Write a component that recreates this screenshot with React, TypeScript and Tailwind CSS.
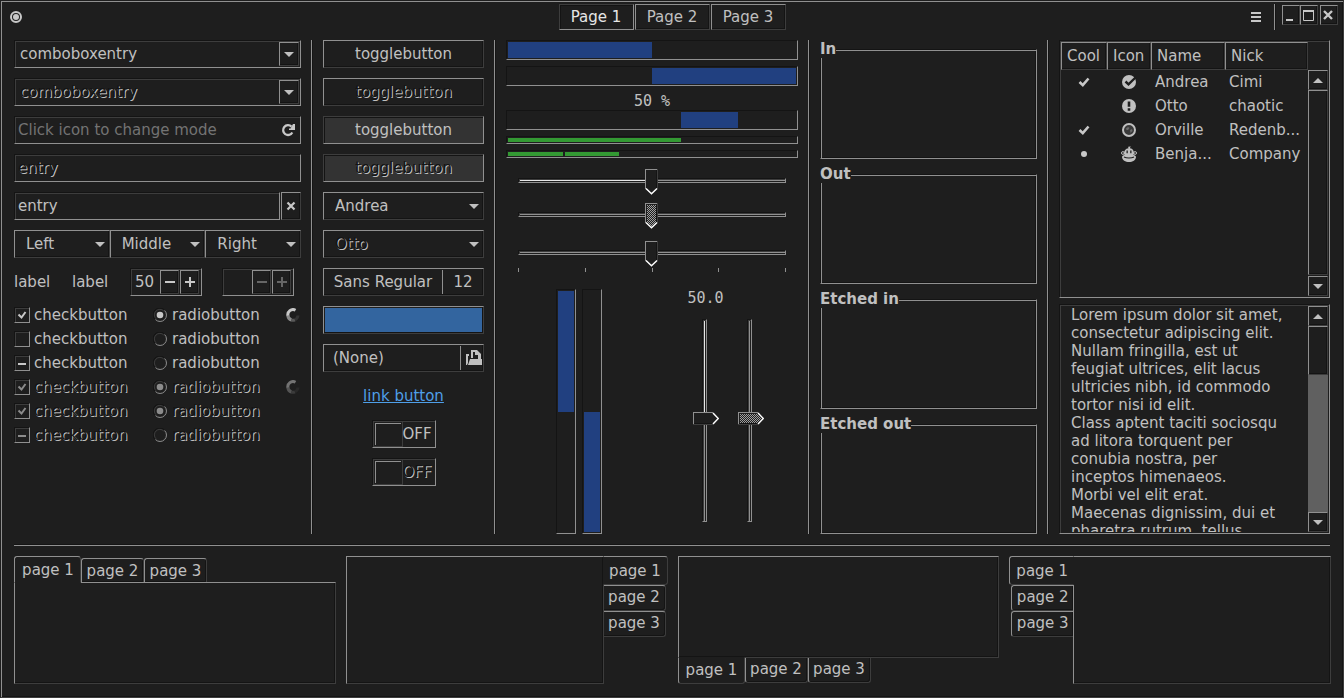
import React, { useState } from "react";

const RAISED =
  "border border-t-[#909090] border-l-[#909090] border-b-[#3d3d3d] border-r-[#3d3d3d] shadow-[inset_-1px_-1px_0_#141414]";
const SUNKEN =
  "border border-t-[#141414] border-l-[#141414] border-b-[#909090] border-r-[#909090] shadow-[inset_1px_1px_0_#3d3d3d]";
const PRESSED =
  "border border-t-[#3d3d3d] border-l-[#3d3d3d] border-b-[#909090] border-r-[#909090] shadow-[inset_1px_1px_0_#141414]";
const TROUGH =
  "border border-t-[#141414] border-l-[#141414] border-b-[#909090] border-r-[#909090]";
const DIM = "text-[#141414] [text-shadow:1px_1px_0_#c0c0c0]";

function Arrow({ up = false }: { up?: boolean }) {
  return (
    <svg width="10" height="5" viewBox="0 0 10 5" fill="#c0c0c0" aria-hidden="true">
      {up ? <path d="M5 0 10 5H0Z" /> : <path d="M0 0h10L5 5Z" />}
    </svg>
  );
}

function VRule() {
  return <div className="w-[2px] shrink-0 border-l border-r border-l-[#909090] border-r-[#141414]" />;
}

function ComboEntry({ label, disabled = false }: { label: string; disabled?: boolean }) {
  return (
    <div className={`flex h-7 items-stretch ${SUNKEN}`}>
      <input
        aria-label={label}
        defaultValue="comboboxentry"
        disabled={disabled}
        className={`min-w-0 flex-1 bg-transparent pl-[5px] outline-none ${disabled ? DIM : ""}`}
      />
      <button
        aria-label={label + " options"}
        className={`mt-px mr-px mb-px flex w-5 items-center justify-center ${RAISED}`}
      >
        <Arrow />
      </button>
    </div>
  );
}

function Combo({ label, options, disabled = false, linked = false }: { label: string; options: string[]; disabled?: boolean; linked?: boolean }) {
  return (
    <div className={`grid h-7 items-center ${linked ? "min-w-0 flex-1" : ""} ${RAISED}`}>
      <select
        aria-label={label}
        disabled={disabled}
        className={`col-start-1 row-start-1 h-full w-full appearance-none bg-transparent pl-[11px] opacity-100 outline-none ${disabled ? DIM : ""}`}
      >
        {options.map((o) => (
          <option key={o}>{o}</option>
        ))}
      </select>
      <span className="pointer-events-none col-start-1 row-start-1 justify-self-end pr-1">
        <Arrow />
      </span>
    </div>
  );
}

function Spin({ value, label, disabled = false }: { value: string; label: string; disabled?: boolean }) {
  const color = disabled ? "#666666" : "#c8c8c8";
  return (
    <div className={`flex h-7 w-[72px] ${SUNKEN}`}>
      <input
        aria-label={label}
        defaultValue={value}
        disabled={disabled}
        className="w-[29px] min-w-0 bg-transparent pl-1 outline-none"
      />
      {["M0 5h10", "M0 5h10M5 0v10"].map((d, i) => (
        <button
          key={d}
          disabled={disabled}
          aria-label={i ? "Increase" : "Decrease"}
          className={`mt-px mb-px flex w-[19px] items-center justify-center ${i ? "ml-px" : ""} ${RAISED}`}
        >
          <svg width="10" height="10" viewBox="0 0 10 10" stroke={color} strokeWidth="2">
            <path d={d} />
          </svg>
        </button>
      ))}
    </div>
  );
}

function Check({ state, disabled = false }: { state: "on" | "off" | "mixed"; disabled?: boolean }) {
  const color = disabled ? "#8c8c8c" : "#c8c8c8";
  return (
    <label className="flex h-[18px] w-[139px] items-center gap-1">
      <span className={`grid size-4 place-items-center ${SUNKEN}`}>
        <input type="checkbox" defaultChecked={state === "on"} disabled={disabled} className="col-start-1 row-start-1 size-3 appearance-none" />
        <svg width="12" height="12" viewBox="0 0 12 12" fill="none" stroke={color} strokeWidth="2" className="pointer-events-none col-start-1 row-start-1">
          {state === "on" && <path d="M2.5 5.5 5.5 8.5 9.5 3" />}
          {state === "mixed" && <path d="M2 7h8" />}
        </svg>
      </span>
      <span className={disabled ? DIM : ""}>checkbutton</span>
    </label>
  );
}

function Radio({ on, group, disabled = false }: { on: boolean; group: string; disabled?: boolean }) {
  return (
    <label className="flex h-[18px] w-[133px] items-center gap-[5px]">
      <span className="grid size-[14px] place-items-center">
        <input type="radio" name={group} defaultChecked={on} disabled={disabled} className="col-start-1 row-start-1 size-[14px] appearance-none" />
        <svg width="14" height="14" viewBox="0 0 14 14" fill="none" className="pointer-events-none col-start-1 row-start-1">
          <path d="M2 11.5A6.4 6.4 0 0 1 11.5 2" stroke="#141414" />
          <path d="M3 10.8A5.4 5.4 0 0 1 10.8 3" stroke="#3d3d3d" />
          <path d="M11.6 2.5A6.4 6.4 0 0 1 2.5 11.6" stroke="#909090" />
          {on && <circle cx="7" cy="7" r="3.3" fill={disabled ? "#8c8c8c" : "#c8c8c8"} />}
        </svg>
      </span>
      <span className={disabled ? DIM : ""}>radiobutton</span>
    </label>
  );
}

function Spinner({ dim = false }: { dim?: boolean }) {
  return (
    <svg width="14" height="14" viewBox="0 0 14 14" fill="none" strokeWidth="3" className={dim ? "opacity-50" : ""} aria-hidden="true">
      <path d="M9.5 2.2A5.2 5.2 0 0 0 2 8" stroke="#c8c8c8" />
      <path d="M1.9 7.5A5.2 5.2 0 0 0 5.5 12" stroke="#8a8a8a" />
      <path d="M5.3 12A5.2 5.2 0 0 0 9 11.8" stroke="#585858" />
      <path d="M9 11.8A5.2 5.2 0 0 0 12 7.5" stroke="#343434" />
    </svg>
  );
}

function Toggle({ on = false, disabled = false }: { on?: boolean; disabled?: boolean }) {
  return (
    <button
      aria-pressed={on}
      disabled={disabled}
      className={`h-7 leading-[18px] ${on ? "bg-[#333333]" : ""} ${on ? PRESSED : RAISED} ${disabled ? DIM : ""}`}
    >
      togglebutton
    </button>
  );
}

function Switch({ disabled = false, label }: { disabled?: boolean; label: string }) {
  return (
    <button role="switch" aria-checked="false" aria-label={label} disabled={disabled} className={`flex h-7 w-16 items-center self-center ${SUNKEN}`}>
      <span className="h-full w-[30px] border border-[#3d3d3d] p-px">
        <span className="block h-full border-t border-l border-[#909090]" />
      </span>
      <span className={`leading-[18px] ${disabled ? DIM : ""}`}>OFF</span>
    </button>
  );
}

function Thumb({ vertical = false, disabled = false }: { vertical?: boolean; disabled?: boolean }) {
  const id = vertical ? "dots-v" : "dots-h";
  return vertical ? (
    <svg width="26" height="13" viewBox="0 0 26 13" fill="none" shapeRendering="crispEdges" className="relative shrink-0">
      <defs>
        <pattern id={id} width="2" height="2" patternUnits="userSpaceOnUse">
          <path d="M0 0h1v1H0zM1 1h1v1H1z" fill="#a0a0a0" />
        </pattern>
      </defs>
      <path d="M0 0h20l6 6.5-6 6.5H0Z" fill="#1e1e1e" />
      {disabled && <path d="M2 2h18l4 4.5-4 4.5H2Z" fill={`url(#${id})`} />}
      <path d="M1 11.5h19" stroke="#141414" />
      <path d="M0 12.5h20" stroke="#3d3d3d" />
      <path d="M.5 12V.5H20" stroke="#909090" />
      <path d="M20 1l5.3 5.5L20 12" stroke="#fff" strokeWidth="1.5" shapeRendering="auto" />
    </svg>
  ) : (
    <svg width="13" height="26" viewBox="0 0 13 26" fill="none" shapeRendering="crispEdges" className="relative shrink-0">
      <defs>
        <pattern id={id} width="2" height="2" patternUnits="userSpaceOnUse">
          <path d="M0 0h1v1H0zM1 1h1v1H1z" fill="#a0a0a0" />
        </pattern>
      </defs>
      <path d="M0 0h13v19l-6.5 6L0 19Z" fill="#1e1e1e" />
      {disabled && <path d="M2 2h9v18l-4.5 4L2 20Z" fill={`url(#${id})`} />}
      <path d="M11.5 1v19" stroke="#141414" />
      <path d="M12.5 0v20" stroke="#3d3d3d" />
      <path d="M.5 20V.5H12" stroke="#909090" />
      <path d="M1 19.5l5.5 5.3 5.5-5.3" stroke="#fff" strokeWidth="1.5" shapeRendering="auto" />
    </svg>
  );
}

function HScale({ label, filled = false, disabled = false }: { label: string; filled?: boolean; disabled?: boolean }) {
  const [value, setValue] = useState(50);
  return (
    <div className="mx-3 grid h-[26px]">
      <div className={`col-start-1 row-start-1 mt-[9px] h-[5px] ${SUNKEN}`}>
        <div className="mt-px ml-px flex h-px">
          <div className={filled ? "bg-[#e6e6e6]" : "bg-[#909090]"} style={{ width: `${value}%` }} />
          <div className="flex-1 bg-[#909090]" />
        </div>
      </div>
      <div className="col-start-1 row-start-1 flex pr-[2px]">
        <div style={{ flexGrow: value }} />
        <Thumb disabled={disabled} />
        <div style={{ flexGrow: 100 - value }} />
      </div>
      <input
        type="range"
        aria-label={label}
        disabled={disabled}
        value={value}
        onChange={(e) => setValue(Number(e.target.value))}
        className="relative col-start-1 row-start-1 w-full opacity-0"
      />
    </div>
  );
}

function VScale({ label, filled = false, disabled = false }: { label: string; filled?: boolean; disabled?: boolean }) {
  const [value, setValue] = useState(50);
  return (
    <div className="grid min-h-0 w-[26px] flex-1">
      <div className={`col-start-1 row-start-1 ml-[9px] w-[5px] ${SUNKEN}`}>
        <div className="ml-px flex h-full w-px flex-col pt-px">
          <div className={filled ? "bg-[#e6e6e6]" : "bg-[#909090]"} style={{ height: `${value}%` }} />
          <div className="flex-1 bg-[#909090]" />
        </div>
      </div>
      <div className="col-start-1 row-start-1 flex flex-col pb-1">
        <div style={{ flexGrow: value }} />
        <Thumb vertical disabled={disabled} />
        <div style={{ flexGrow: 100 - value }} />
      </div>
      <input
        type="range"
        aria-label={label}
        disabled={disabled}
        value={value}
        onChange={(e) => setValue(Number(e.target.value))}
        className="relative col-start-1 row-start-1 h-full min-h-0 w-full opacity-0 [writing-mode:vertical-lr]"
      />
    </div>
  );
}

function Bar({ from, to, label }: { from: number; to: number; label: string }) {
  return (
    <div role="progressbar" aria-label={label} aria-valuenow={to - from} className={`h-5 p-px ${TROUGH}`}>
      <div className="h-full bg-[#214080]" style={{ marginLeft: `${from}%`, width: `${to - from}%` }} />
    </div>
  );
}

function Frame({ title }: { title: string }) {
  return (
    <fieldset className="min-h-0 min-w-0 flex-1 border border-t-[#141414] border-l-[#141414] border-b-[#909090] border-r-[#909090] shadow-[inset_1px_1px_0_#909090,inset_-1px_-1px_0_#141414]">
      <legend className="-ml-px bg-[#1e1e1e] leading-[18px] font-bold">{title}</legend>
    </fieldset>
  );
}

function Scrollbar({ full = false }: { full?: boolean }) {
  return (
    <div className={`flex w-[20px] shrink-0 flex-col ${full ? "" : "bg-[#606060]"}`}>
      <button aria-label="Scroll up" className={`flex h-5 items-center justify-center bg-[#1e1e1e] ${RAISED}`}>
        <Arrow up />
      </button>
      <div className={`bg-[#1e1e1e] ${full ? "flex-1" : "h-[49px]"} ${RAISED}`} />
      {!full && <div className="flex-1" />}
      <button aria-label="Scroll down" className={`flex h-5 items-center justify-center bg-[#1e1e1e] ${full ? "mt-px" : ""} ${RAISED}`}>
        <Arrow />
      </button>
    </div>
  );
}

function Tick() {
  return (
    <svg width="12" height="12" viewBox="0 0 12 12" fill="none" stroke="#c8c8c8" strokeWidth="2.6" className="mx-auto">
      <path d="M1.5 6 4.8 9.2 10.5 2.5" />
    </svg>
  );
}

const rows = [
  {
    cool: <Tick />, name: "Andrea", nick: "Cimi",
    icon: (
      <svg width="16" height="16" viewBox="0 0 16 16" className="mx-auto">
        <circle cx="8" cy="8" r="7" fill="#c0c0c0" />
        <path d="M4.5 7.5 7.5 10.3 15 3" fill="none" stroke="#1e1e1e" strokeWidth="2.4" />
      </svg>
    ),
  },
  {
    cool: null, name: "Otto", nick: "chaotic",
    icon: (
      <svg width="16" height="16" viewBox="0 0 16 16" className="mx-auto">
        <circle cx="8" cy="8" r="7" fill="#c0c0c0" />
        <path d="M6.7 3.5h2.6v5.3H6.7zM6.7 10.3h2.6v2.4H6.7z" fill="#1e1e1e" />
      </svg>
    ),
  },
  {
    cool: <Tick />, name: "Orville", nick: "Redenb...",
    icon: (
      <svg width="16" height="16" viewBox="0 0 16 16" className="mx-auto">
        <circle cx="8" cy="8" r="6" fill="#3a3a3a" stroke="#c0c0c0" strokeWidth="2" />
        <path d="M5 6.5 7 5l1.5 1L7 8H5.5zM9 8l2-1 .5 2L9.5 11z" fill="#6a6a6a" />
      </svg>
    ),
  },
  {
    cool: <div className="mx-auto size-[6px] rounded-full bg-[#c8c8c8]" />, name: "Benja...", nick: "Company",
    icon: (
      <svg width="16" height="16" viewBox="0 0 16 16" className="mx-auto">
        <circle cx="1.9" cy="7" r="1.4" fill="none" stroke="#c0c0c0" />
        <circle cx="14.1" cy="7" r="1.4" fill="none" stroke="#c0c0c0" />
        <path d="M7.5 2.2 7 .8h1.2L9.5 0 9 2.2C11.8 2.6 13 4.8 13 7.300 13 9.500 11 9.500 8 9.500S3 9.500 3 7.300C3 4.800 4.500 2.500 7.500 2.200Z" fill="#c0c0c0" />
        <path d="M5.500 4.500h1.300v2.700H5.500zM9.200 4.500h1.300v2.700H9.200z" fill="#1e1e1e" />
        <path d="M8 8.500c4 0 7 .8 7 2.500 0 3-3.500 5-7 5s-7-2-7-5c0-1.700 3-2.500 7-2.500Z" fill="#c0c0c0" />
        <path d="M3 11c2.500 1.300 7.500 1.300 10 0" fill="none" stroke="#1e1e1e" strokeWidth="1.2" />
      </svg>
    ),
  },
];

const TEXT = `Lorem ipsum dolor sit amet, consectetur adipiscing elit.
Nullam fringilla, est ut feugiat ultrices, elit lacus ultricies nibh, id commodo tortor nisi id elit.
Class aptent taciti sociosqu ad litora torquent per conubia nostra, per inceptos himenaeos.
Morbi vel elit erat. Maecenas dignissim, dui et pharetra rutrum, tellus`;

const PAGES = ["page 1", "page 2", "page 3"];
const PANE = "min-h-0 min-w-0 flex-1 " + RAISED;

function Notebook({ side }: { side: "top" | "right" | "bottom" | "left" }) {
  const outer = {
    top: "flex-col",
    right: "flex-row-reverse",
    bottom: "flex-col-reverse",
    left: "flex-row",
  }[side];
  const list = {
    top: "-mb-px items-end",
    right: "-ml-px flex-col items-start",
    bottom: "-mt-px items-start",
    left: "-mr-px flex-col items-end",
  }[side];
  const active = {
    top: "h-[27px] w-[67px] rounded-t-[3px] border-b-transparent pl-px shadow-none",
    right: "h-[29px] w-[65px] rounded-r-[3px] border-l-transparent shadow-none",
    bottom: "h-[27px] w-[67px] rounded-b-[3px] border-t-transparent pb-[2px] pl-px shadow-none",
    left: "h-[29px] w-[65px] rounded-l-[3px] border-r-transparent pl-px shadow-none",
  }[side];
  const idle = {
    top: "mb-px h-6 w-[63px] rounded-t-[3px] border-b-0",
    right: "ml-px h-[26px] w-[62px] rounded-r-[3px] border-l-0 pb-[2px]",
    bottom: "mt-px h-[25px] w-[63px] rounded-b-[3px] border-t-0 pb-[2px]",
    left: "mr-px h-[26px] w-[62px] rounded-l-[3px] border-r-0 pb-[2px]",
  }[side];
  return (
    <div className={`flex h-32 min-w-0 ${outer}`}>
      <div role="tablist" className={`relative flex shrink-0 ${list}`}>
        {PAGES.map((p, i) => (
          <button
            key={p}
            role="tab"
            aria-selected={i === 0}
            className={`bg-[#1e1e1e] text-center leading-[18px] whitespace-nowrap ${RAISED} ${i === 0 ? active : idle}`}
          >
            {p}
          </button>
        ))}
      </div>
      <div role="tabpanel" className={PANE} />
    </div>
  );
}

export default function App() {
  return (
    <div className="flex min-h-screen flex-col border border-[#1e1e1e] border-r-[#3d3d3d] border-b-[#3d3d3d] bg-[#1e1e1e] font-['DejaVu_Sans',sans-serif] text-[15px] leading-[18px] text-[#c0c0c0] shadow-[inset_1px_1px_0_#909090,inset_-1px_-1px_0_#141414]">
      <header className="flex h-[39px] items-start px-[5px] pt-[3px]">
        <div className="flex h-[26px] flex-1 items-center">
          <svg width="12" height="12" viewBox="0 0 12 12" className="ml-1" aria-hidden="true">
            <circle cx="6" cy="6" r="5" fill="none" stroke="#c8c8c8" strokeWidth="2" />
            <circle cx="6" cy="6" r="3" fill="#c8c8c8" />
          </svg>
        </div>
        <nav className="flex gap-px">
          {["Page 1", "Page 2", "Page 3"].map((p, i) => (
            <button key={p} className={`h-[26px] w-[75px] ${i === 0 ? "text-[#e6e6e6]" : ""} ${i === 0 ? PRESSED : RAISED}`}>
              {p}
            </button>
          ))}
        </nav>
        <div className="flex flex-1 justify-end">
          <button aria-label="Menu" className="flex h-[26px] w-6 items-center justify-center">
            <svg width="10" height="10" viewBox="0 0 10 10" stroke="#c8c8c8" strokeWidth="2">
              <path d="M0 1h10M0 5h10M0 9h10" />
            </svg>
          </button>
          <div className="mr-[6px] ml-[6px] flex h-[26px]">
            <VRule />
          </div>
          {["M2 13h7", "M1 3.5h11M1.5 3v10.5h10V3M1 4.5h11", "M2 4l8 8M10 4l-8 8"].map((d, i) => (
            <button
              key={d}
              aria-label={["Minimize", "Maximize", "Close"][i]}
              className={`mt-px flex h-5 w-[18px] items-center justify-center ${i === 2 ? "ml-[2px]" : ""} ${RAISED}`}
            >
              <svg width="14" height="16" viewBox="0 0 14 16" fill="none" stroke="#c8c8c8" className="shrink-0" strokeWidth={i === 2 ? 2.4 : i === 0 ? 2 : 1}>
                <path d={d} />
              </svg>
            </button>
          ))}
        </div>
      </header>

      <main className="mx-[13px] flex flex-1 gap-[10px]">
        <section className="flex w-[287px] shrink-0 flex-col gap-[10px]">
          <ComboEntry label="Combo entry" />
          <ComboEntry label="Disabled combo entry" disabled />
          <div className={`flex h-7 items-center ${SUNKEN}`}>
            <input aria-label="Mode" placeholder="Click icon to change mode" className="min-w-0 flex-1 bg-transparent pl-[3px] outline-none placeholder:text-[#737373]" />
            <button aria-label="Change mode" className="mr-[5px]">
              <svg width="14" height="14" viewBox="0 0 14 14" fill="none">
                <path d="M10.5 3.6A4.9 4.9 0 1 0 11.3 9.5" stroke="#c8c8c8" strokeWidth="2.3" />
                <path d="M14 1v6H8V5.5h1.5L12 1Z" fill="#c8c8c8" />
              </svg>
            </button>
          </div>
          <input aria-label="Disabled entry" defaultValue="entry" disabled className={`h-7 bg-transparent pl-[3px] ${SUNKEN} ${DIM}`} />
          <div className="flex">
            <input aria-label="Entry" defaultValue="entry" className={`h-7 min-w-0 flex-1 bg-transparent pl-[3px] outline-none ${SUNKEN}`} />
            <button aria-label="Clear" className={`ml-px flex h-7 w-5 items-center justify-center ${RAISED}`}>
              <svg width="10" height="10" viewBox="0 0 10 10" stroke="#c8c8c8" strokeWidth="2.2">
                <path d="M1.5 1.5l7 7M8.5 1.5l-7 7" />
              </svg>
            </button>
          </div>
          <div className="flex">
            <Combo linked label="Left" options={["Left", "First"]} />
            <Combo linked label="Middle" options={["Middle", "Second"]} />
            <Combo linked label="Right" options={["Right", "Third"]} />
          </div>
          <div className="flex items-center gap-5">
            <span className="w-[38px]">label</span>
            <span className="w-[38px]">label</span>
            <Spin label="Amount" value="50" />
            <Spin label="Disabled amount" value="" disabled />
          </div>
          <div className="flex flex-col gap-[6px]">
            {(["on", "off", "mixed", "on", "on", "mixed"] as const).map((s, i) => (
              <div key={i} className="flex h-[18px] items-center">
                <Check state={s} disabled={i > 2} />
                <Radio on={i === 0 || i === 3 || i === 4} group={i < 3 ? "a" : `b${i}`} disabled={i > 2} />
                {(i === 0 || i === 3) && <Spinner dim={i === 3} />}
              </div>
            ))}
          </div>
        </section>
        <VRule />

        <section className="flex w-[161px] shrink-0 flex-col gap-[10px]">
          <Toggle />
          <Toggle disabled />
          <Toggle on />
          <Toggle on disabled />
          <Combo label="Person" options={["Andrea", "Otto"]} />
          <Combo label="Disabled person" options={["Otto"]} disabled />
          <button className={`flex h-7 items-stretch py-px text-center ${RAISED}`}>
            <span className="flex flex-1 items-center justify-center">Sans Regular</span>
            <span className="flex w-[41px] items-center justify-center border-l border-[#909090]">12</span>
          </button>
          <input
            type="color"
            aria-label="Color"
            defaultValue="#33659f"
            className={`h-7 w-full appearance-none bg-transparent p-px [&::-webkit-color-swatch]:rounded-none [&::-webkit-color-swatch]:border-0 [&::-webkit-color-swatch-wrapper]:p-0 ${RAISED}`}
          />
          <button className={`flex h-7 items-stretch py-px text-left ${RAISED}`}>
            <span className="flex flex-1 items-center pl-[9px]">(None)</span>
            <span className="flex w-[23px] items-center border-l border-[#909090] pl-[5px]">
              <svg width="16" height="16" viewBox="0 0 16 16" fill="#c0c0c0" className="shrink-0" aria-hidden="true">
                <path d="M0 4h3v2H2v7l-1 2H0Z" />
                <path d="M5 8V0h6l4 4v5h-3V5h-3V2H7v6Z" />
                <path d="M4 9h12v6H2Z" />
              </svg>
            </span>
          </button>
          <a href="#" className="flex h-7 items-center self-center text-[#4f9fe8] underline">link button</a>
          <Switch label="Switch" />
          <Switch label="Disabled switch" disabled />
        </section>
        <VRule />

        <section className="flex min-w-0 flex-1 flex-col">
          <div className="flex flex-col gap-[6px]">
            <Bar label="Progress" from={0} to={50} />
            <Bar label="Inverted progress" from={50} to={100} />
            <div>
              <div className="text-center font-['DejaVu_Sans_Mono',monospace]">50 %</div>
              <Bar label="Activity" from={60} to={80} />
            </div>
            <div className={`h-2 p-px ${TROUGH}`}>
              <div className="h-full w-3/5 bg-[#339933]" />
            </div>
            <div className={`flex h-2 gap-[2px] p-px ${TROUGH}`}>
              <div className="w-[19%] bg-[#339933]" />
              <div className="w-[19%] bg-[#339933]" />
            </div>
          </div>
          <div className="mt-[11px] flex flex-col gap-[8px]">
            <HScale label="Scale" filled />
            <HScale label="Disabled scale" disabled />
            <div className="mt-1">
              <HScale label="Scale with marks" />
              <div className="mx-3 mt-px flex h-1 justify-between">
                {[0, 25, 50, 75, 100].map((m) => (
                  <div key={m} className="w-px bg-[#909090]" />
                ))}
              </div>
            </div>
          </div>
          <div className="mt-[17px] grid min-h-[160px] flex-1 grid-cols-2">
            <div className="flex justify-center gap-[6px]">
              <div role="progressbar" aria-label="Vertical progress" className={`w-5 p-px ${TROUGH}`}>
                <div className="h-1/2 bg-[#214080]" />
              </div>
              <div role="progressbar" aria-label="Vertical inverted progress" className={`flex w-5 items-end p-px ${TROUGH}`}>
                <div className="h-1/2 w-full bg-[#214080]" />
              </div>
            </div>
            <div className="flex justify-center gap-[14px] pl-px">
              <div className="flex flex-col items-center gap-3 pb-3">
                <span className="font-['DejaVu_Sans_Mono',monospace]">50.0</span>
                <VScale label="Vertical scale" filled />
              </div>
              <div className="flex flex-col pt-[30px] pb-3">
                <VScale label="Disabled vertical scale" disabled />
              </div>
            </div>
          </div>
        </section>
        <VRule />

        <section className="flex w-[217px] shrink-0 flex-col gap-[6px]">
          <Frame title="In" />
          <Frame title="Out" />
          <Frame title="Etched in" />
          <Frame title="Etched out" />
        </section>
        <VRule />

        <section className="flex w-[271px] shrink-0 flex-col gap-[6px]">
          <div className={`flex h-[258px] shrink-0 p-px ${SUNKEN}`}>
            <div className="min-w-0 flex-1">
              <table className="w-full table-fixed border-separate border-spacing-0">
                <colgroup>
                  <col className="w-[46px]" />
                  <col className="w-[44px]" />
                  <col className="w-[74px]" />
                  <col />
                </colgroup>
                <thead>
                  <tr>
                    {["Cool", "Icon", "Name", "Nick"].map((h) => (
                      <th key={h} className={`h-7 p-0 pl-[5px] text-left font-normal ${RAISED}`}>{h}</th>
                    ))}
                  </tr>
                </thead>
                <tbody>
                  {rows.map((r) => (
                    <tr key={r.name}>
                      <td className="h-6 p-0">{r.cool}</td>
                      <td className="h-6 p-0">{r.icon}</td>
                      <td className="h-6 p-0 pl-1">{r.name}</td>
                      <td className="h-6 p-0 pl-1 whitespace-nowrap">{r.nick}</td>
                    </tr>
                  ))}
                </tbody>
              </table>
            </div>
            <div className="flex pt-7">
              <Scrollbar full />
            </div>
          </div>
          <div className={`flex min-h-0 flex-1 p-px ${SUNKEN}`}>
            <textarea aria-label="Text" defaultValue={TEXT} rows={1} className="min-w-0 flex-1 resize-none overflow-hidden bg-transparent pr-6 pl-[10px] outline-none" />
            <Scrollbar />
          </div>
        </section>
      </main>

      <div className="mx-[13px] mt-[10px] h-[2px] border-t border-b border-t-[#141414] border-b-[#909090]" />

      <footer className="mt-[10px] mr-3 mb-[13px] ml-[13px] grid grid-cols-4 gap-[10px]">
        <Notebook side="top" />
        <Notebook side="right" />
        <Notebook side="bottom" />
        <Notebook side="left" />
      </footer>
    </div>
  );
}
